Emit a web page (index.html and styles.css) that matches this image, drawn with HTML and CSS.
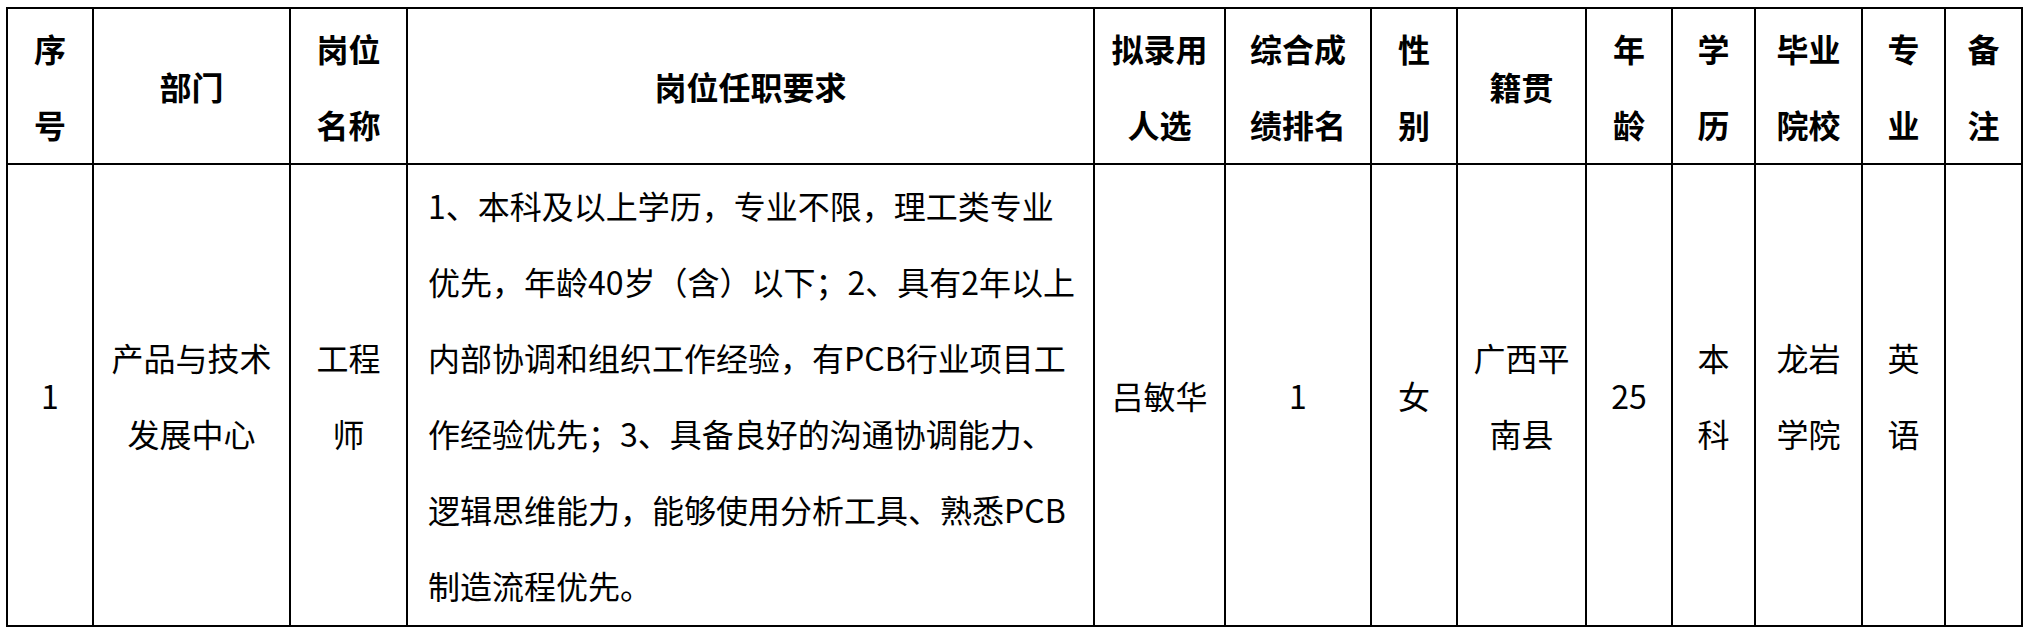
FILE: index.html
```html
<!DOCTYPE html>
<html lang="zh-CN">
<head>
<meta charset="utf-8">
<title>拟录用人选</title>
<link rel="stylesheet" href="styles.css">
</head>
<body>
<table class="sheet">
  <colgroup>
    <col class="c1"><col class="c2"><col class="c3"><col class="c4"><col class="c5"><col class="c6"><col class="c7"><col class="c8"><col class="c9"><col class="c10"><col class="c11"><col class="c12"><col class="c13">
  </colgroup>
  <thead>
    <tr class="head">
      <th>序<br>号</th>
      <th>部门</th>
      <th>岗位<br>名称</th>
      <th>岗位任职要求</th>
      <th>拟录用<br>人选</th>
      <th>综合成<br>绩排名</th>
      <th>性<br>别</th>
      <th>籍贯</th>
      <th>年<br>龄</th>
      <th>学<br>历</th>
      <th>毕业<br>院校</th>
      <th>专<br>业</th>
      <th>备<br>注</th>
    </tr>
  </thead>
  <tbody>
    <tr class="body">
      <td>1</td>
      <td>产品与技术<br>发展中心</td>
      <td>工程<br>师</td>
      <td class="req">1、本科及以上学历，专业不限，理工类专业<br>优先，年龄40岁（含）以下；2、具有2年以上<br>内部协调和组织工作经验，有PCB行业项目工<br>作经验优先；3、具备良好的沟通协调能力、<br>逻辑思维能力，能够使用分析工具、熟悉PCB<br>制造流程优先。</td>
      <td>吕敏华</td>
      <td>1</td>
      <td>女</td>
      <td>广西平<br>南县</td>
      <td>25</td>
      <td>本<br>科</td>
      <td>龙岩<br>学院</td>
      <td>英<br>语</td>
      <td></td>
    </tr>
  </tbody>
</table>
</body>
</html>
```

FILE: styles.css
```css
html, body {
  margin: 0;
  padding: 0;
  background: #ffffff;
}

body {
  font-family: "Noto Sans CJK SC", "Noto Sans", sans-serif;
  color: #000000;
}

.sheet {
  margin: 7px 0 0 6px;
  border-collapse: collapse;
  table-layout: fixed;
  width: 2017px;
}

.sheet th,
.sheet td {
  border: 2px solid #000000;
  padding: 0;
  font-size: 32px;
  line-height: 76px;
  text-align: center;
  vertical-align: middle;
  white-space: nowrap;
}

.sheet th {
  font-weight: bold;
}

.head {
  height: 156px;
}

.body {
  height: 462px;
}

.sheet td.req {
  text-align: left;
  padding-left: 20px;
  letter-spacing: 0;
}

.c1 { width: 86px; }
.c2 { width: 197px; }
.c3 { width: 117px; }
.c4 { width: 687px; }
.c5 { width: 131px; }
.c6 { width: 146px; }
.c7 { width: 86px; }
.c8 { width: 129px; }
.c9 { width: 86px; }
.c10 { width: 83px; }
.c11 { width: 107px; }
.c12 { width: 83px; }
.c13 { width: 77px; }
```
